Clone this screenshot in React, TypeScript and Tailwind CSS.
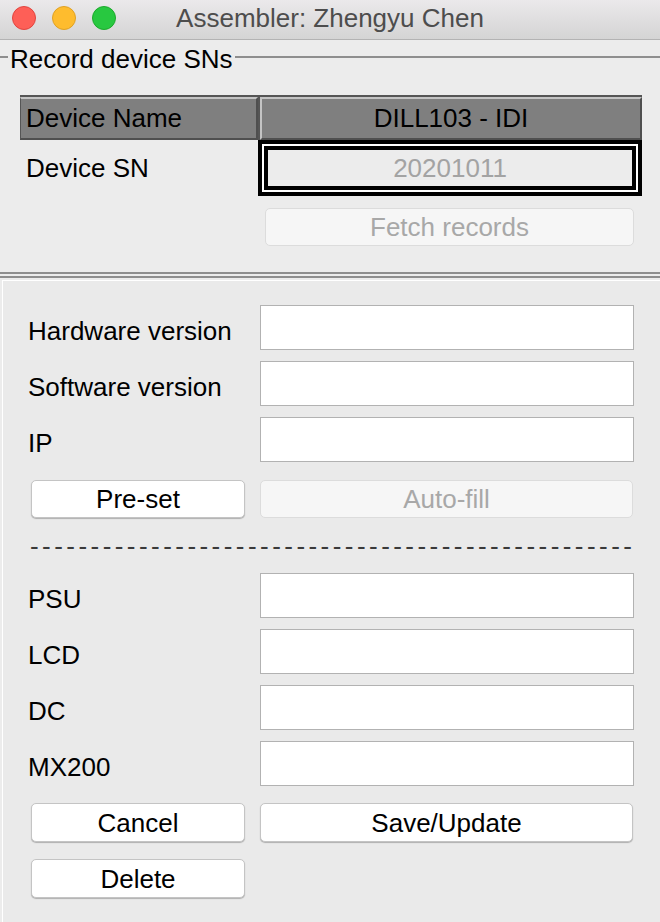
import React from "react";

const font = "font-['Liberation_Sans',Arial,sans-serif]";

function MacButton({
  label,
  disabled,
  className,
}: {
  label: string;
  disabled?: boolean;
  className?: string;
}) {
  return (
    <button
      disabled={disabled}
      className={`flex items-center justify-center rounded-[5px] border text-[26px] leading-none ${
        disabled
          ? "bg-[#f6f6f6] border-[#dcdcdc] text-[#a8a8a8]"
          : "bg-white border-[#c4c4c4] text-black shadow-[0_1px_1px_rgba(0,0,0,0.25)]"
      } ${className ?? ""}`}
    >
      {label}
    </button>
  );
}

function FieldRow({ label }: { label: string }) {
  return (
    <div className="flex items-center h-[45px]">
      <span className="w-[232px] text-[26px] text-black leading-none pt-[6px]">{label}</span>
      <div className="w-[374px] h-[45px] bg-white border border-[#b2b2b2]" />
    </div>
  );
}

export default function App() {
  return (
    <div className={`w-[660px] h-[922px] bg-[#ececec] overflow-hidden ${font}`}>
      {/* TITLE BAR */}
      <div className="relative h-[40px] flex items-center bg-gradient-to-b from-[#ebe9eb] to-[#d4d4d4] border-b border-[#b3b3b3]">
        <div className="flex gap-[16px] pl-[12px] pb-[4px]">
          <div className="w-[24px] h-[24px] rounded-full bg-[#fe5f57] border border-[#e1453f]" />
          <div className="w-[24px] h-[24px] rounded-full bg-[#febc2e] border border-[#dfa125]" />
          <div className="w-[24px] h-[24px] rounded-full bg-[#28c840] border border-[#1daa2c]" />
        </div>
        <div className="absolute inset-0 flex items-center justify-center pb-[2px] text-[26px] text-[#4d4d4d]">
          Assembler: Zhengyu Chen
        </div>
      </div>

      {/* RECORD DEVICE SNs */}
      <div className="pt-[2px]">
        <div className="flex items-center h-[30px]">
          <div className="w-[8px] h-[2px] bg-[#8e8e8e]" />
          <span className="px-[2px] pt-[3px] text-[26px] leading-[30px] text-black">Record device SNs</span>
          <div className="flex-1 h-[2px] bg-[#8e8e8e]" />
        </div>

        <div className="ml-[20px] w-[622px] mt-[23px]">
          {/* header row */}
          <div className="flex h-[45px] border-t-2 border-[#555555]">
            <div className="w-[238px] flex items-center pl-[5px] bg-[#7f7f7f] border-l border-[#555555] border-t-2 border-t-[#c4c4c4] border-r-2 border-r-[#4f4f4f] border-b-2 border-b-[#4f4f4f] text-[26px] text-black">
              Device Name
            </div>
            <div className="flex-1 flex items-center justify-center bg-[#7f7f7f] border-l-2 border-l-[#c4c4c4] border-t-2 border-t-[#c4c4c4] border-r-2 border-r-[#4f4f4f] border-b-2 border-b-[#4f4f4f] ml-[2px] shadow-[-2px_0_0_#555555] text-[26px] text-black">
              DILL103 - IDI
            </div>
          </div>
          {/* SN row */}
          <div className="flex h-[56px]">
            <div className="w-[238px] flex items-center pl-[6px] text-[26px] text-black">Device SN</div>
            <div className="flex-1 border-4 border-black">
              <div className="h-full border-2 border-white">
                <div className="h-full border-4 border-black flex items-center justify-center text-[26px] text-[#a3a3a3]">
                  20201011
                </div>
              </div>
            </div>
          </div>
        </div>

        <MacButton label="Fetch records" disabled className="ml-[265px] mt-[12px] w-[369px] h-[38px]" />

        {/* separator */}
        <div className="mt-[26px] h-[2px] bg-[#8e8e8e]" />
        <div className="mt-[2px] h-[2px] bg-[#8e8e8e]" />
      </div>

      {/* FORM PANEL */}
      <div className="mt-[2px] ml-[2px] h-[700px] bg-[#eaeaea] border-t border-l border-white">
        <div className="pl-[25px] pt-[24px] flex flex-col">
          <div className="flex flex-col gap-[11px]">
            <FieldRow label="Hardware version" />
            <FieldRow label="Software version" />
            <FieldRow label="IP" />
          </div>
          <div className="flex mt-[18px]">
            <MacButton label="Pre-set" className="ml-[3px] w-[214px] h-[38px]" />
            <MacButton label="Auto-fill" disabled className="ml-[15px] w-[373px] h-[38px]" />
          </div>
          <div className="mt-[13px] ml-[2px] h-[30px] text-[26px] leading-[30px] text-[#3a3a3a] tracking-[3.45px] whitespace-nowrap">
            {"-".repeat(50)}
          </div>
          <div className="mt-[12px] flex flex-col gap-[11px]">
            <FieldRow label="PSU" />
            <FieldRow label="LCD" />
            <FieldRow label="DC" />
            <FieldRow label="MX200" />
          </div>
          <div className="flex mt-[17px]">
            <MacButton label="Cancel" className="ml-[3px] w-[214px] h-[39px]" />
            <MacButton label="Save/Update" className="ml-[15px] w-[373px] h-[39px]" />
          </div>
          <div className="flex mt-[17px]">
            <MacButton label="Delete" className="ml-[3px] w-[214px] h-[39px]" />
          </div>
        </div>
      </div>
    </div>
  );
}
